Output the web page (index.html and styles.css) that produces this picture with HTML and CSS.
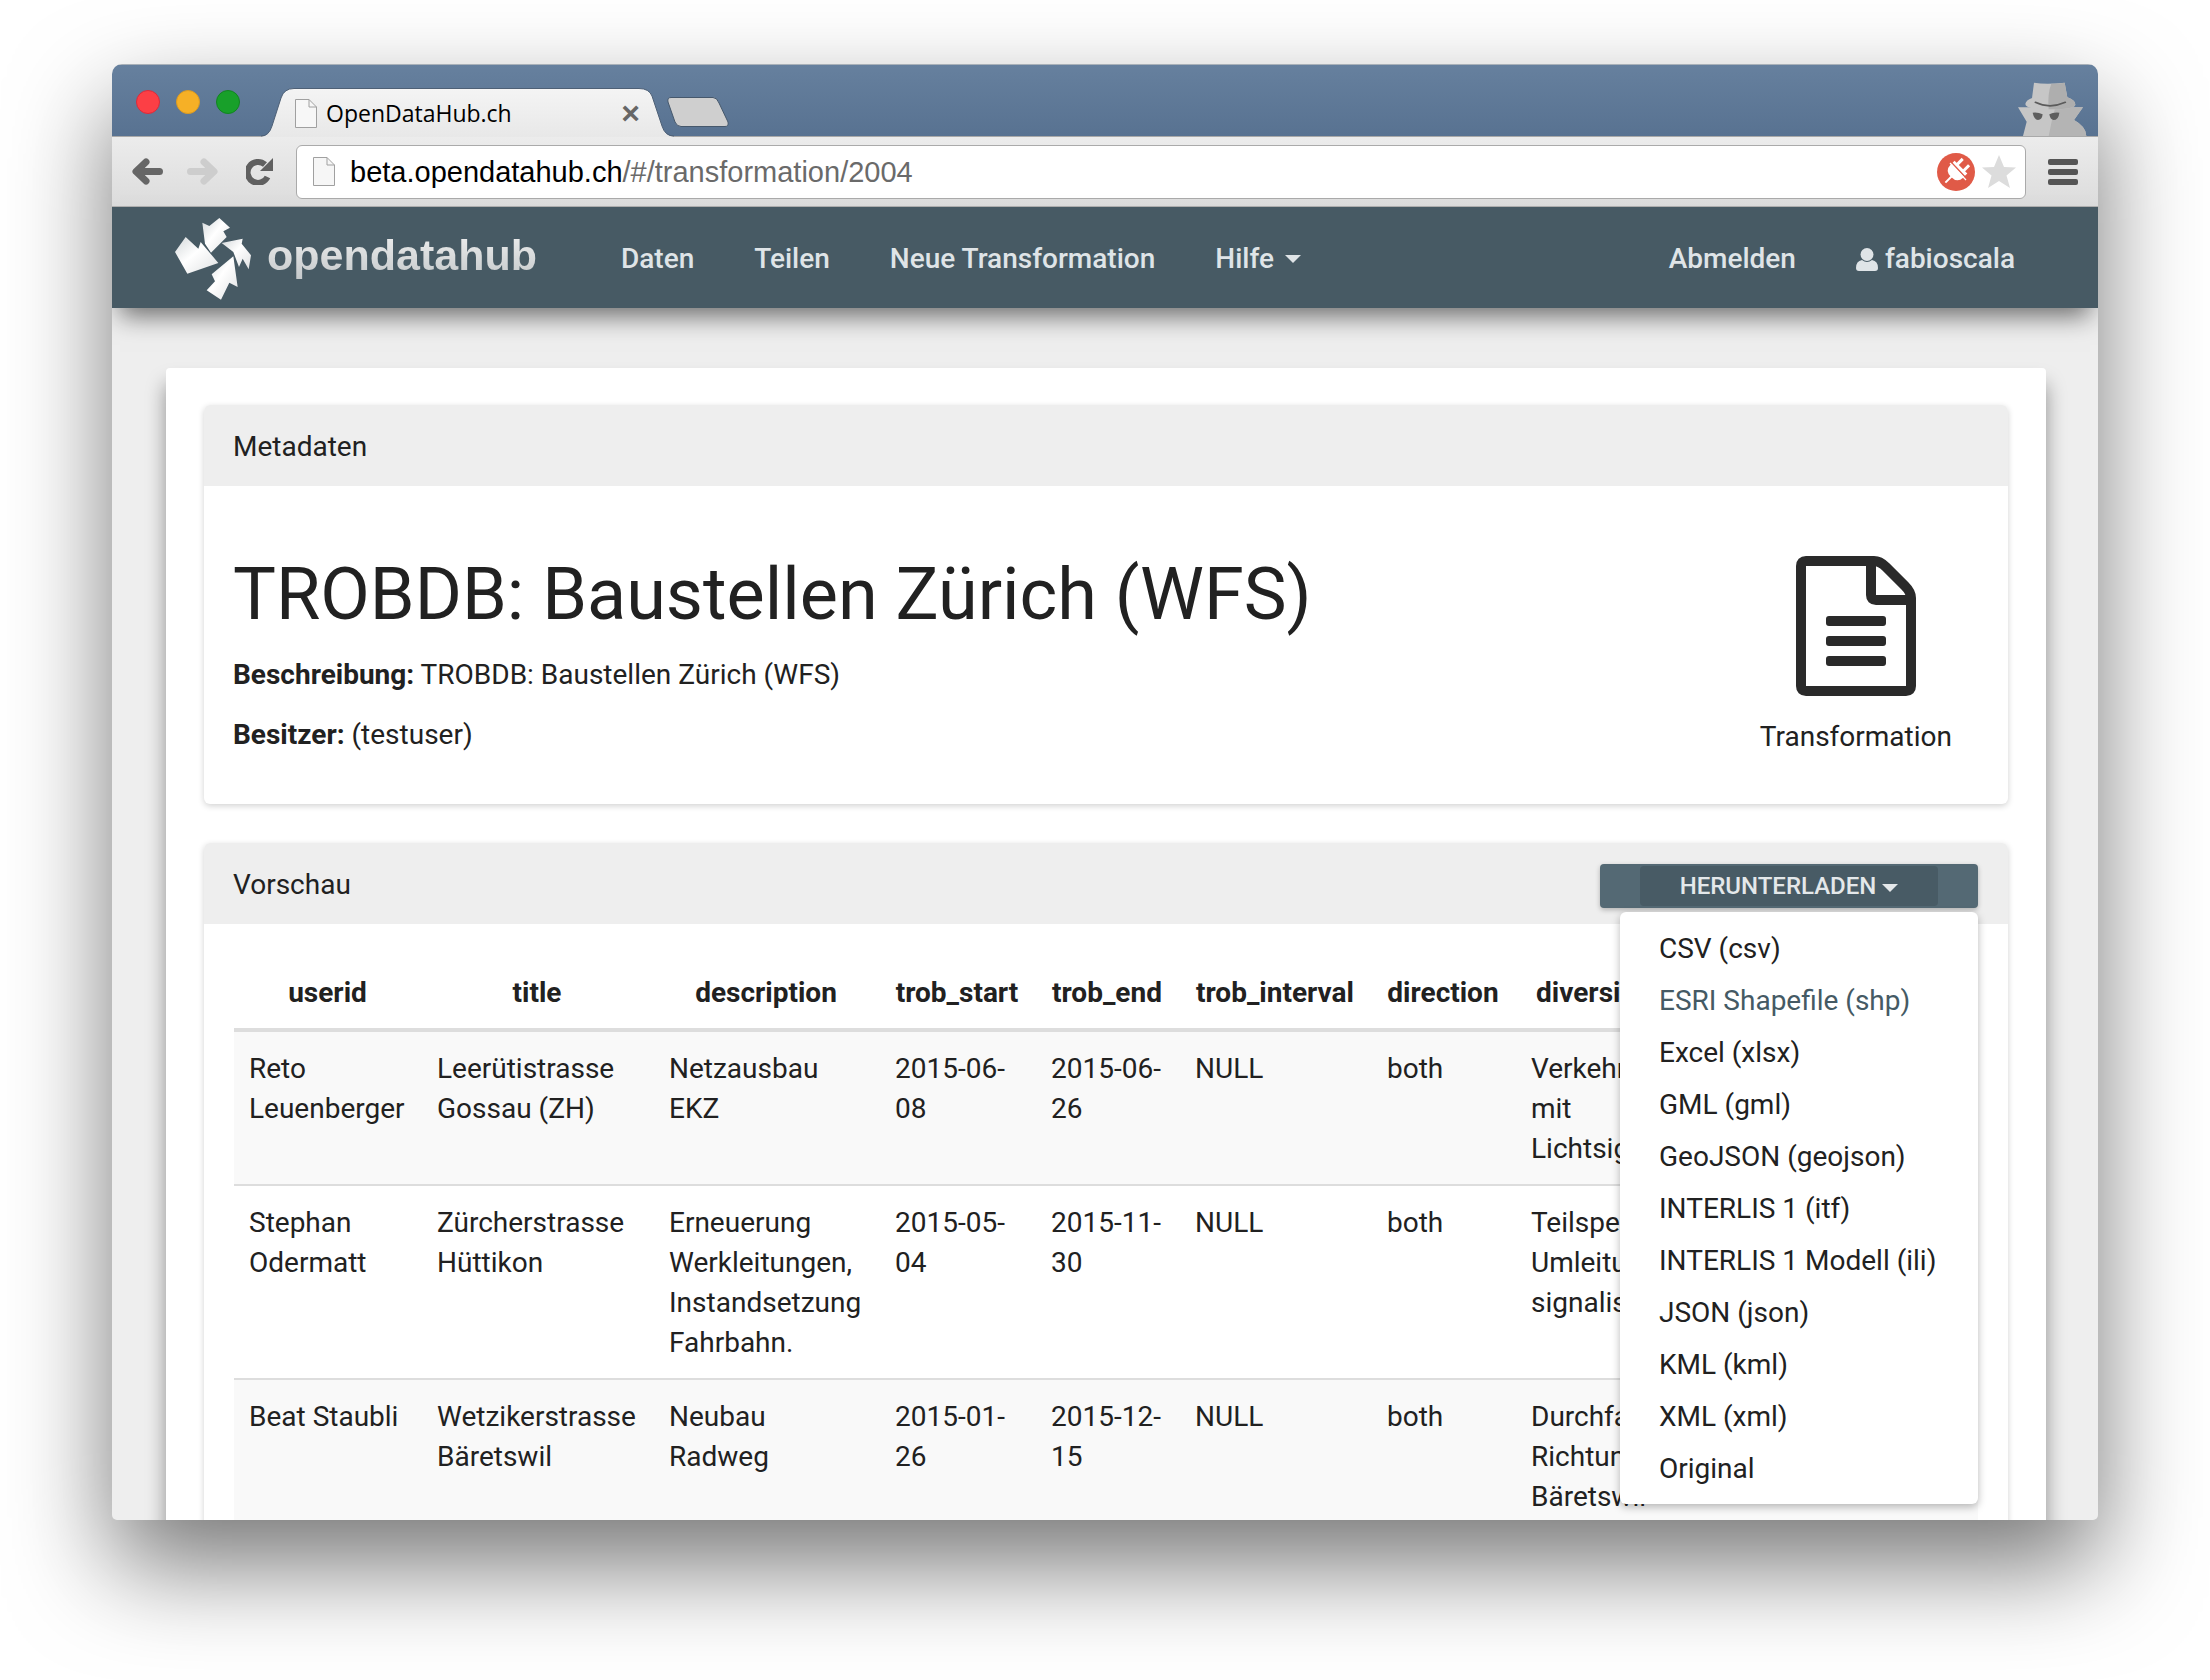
FILE: index.html
```html
<!DOCTYPE html>
<html lang="de">
<head>
    <meta charset="UTF-8">
    <title>OpenDataHub.ch</title>
    <link rel="stylesheet" href="styles.css">
</head>
<body>
    <div class="browser">
        <div class="titlebar">
            <div class="lights">
                <span class="light red"></span>
                <span class="light orange"></span>
                <span class="light green"></span>
            </div>
            <div class="tab">
                <svg class="tab-shape" width="413" height="49" viewBox="0 0 413 49">
                    <defs>
                        <linearGradient id="tabfill" x1="0" y1="0" x2="0" y2="1">
                            <stop offset="0" stop-color="#f4f4f4"/>
                            <stop offset="1" stop-color="#e8e8e8"/>
                        </linearGradient>
                    </defs>
                    <path d="M0 49 Q8 48 11 38 L20 10 Q23 .5 33 .5 H378 Q388 .5 391 8 L401 38 Q404 48 413 49 Z" fill="url(#tabfill)"/>
                    <path d="M0 48 Q8 48 11 38 L20 10 Q23 .5 33 .5 H378 Q388 .5 391 8 L401 38 Q404 48 413 48" fill="none" stroke="#4e6076" stroke-width="1"/>
                </svg>
                <svg class="page-icon" width="22" height="29" viewBox="0 0 22 29">
                    <path d="M.5 .5 H14 L21.5 8 V28.5 H.5 Z" fill="#f7f7f7" stroke="#a0a0a0"/>
                    <path d="M14 .5 V8 H21.5" fill="none" stroke="#a0a0a0"/>
                </svg>
                <span class="tab-title">OpenDataHub.ch</span>
                <span class="tab-close">×</span>
            </div>
            <svg class="new-tab" width="62" height="30" viewBox="0 0 62 30">
                <path d="M4 .5 H46 Q50 .5 52 6 L61 25 Q62 29.500 58 29.500 H14 Q10 29.500 8 25 L1 5 Q0 .5 4 .5 Z" fill="#cfcfcf" stroke="#46586c"/>
            </svg>
            <svg class="incognito" width="72" height="56" viewBox="0 0 216 168">
                <path d="M0 82 H195 L168 120 Q205 140 205 168 H15 L26 125 Z" fill="#c6c6c6"/>
                <path d="M112 82 H195 L168 120 Q205 140 205 168 H92 Q100 125 112 82 Z" fill="#b4b4b4"/>
                <path d="M48 8 Q85 14 140 8 L148 52 Q172 60 172 74 Q172 88 95 88 Q22 88 22 72 Q24 60 42 54 Z" fill="#c6c6c6"/>
                <path d="M100 11 Q120 12 140 8 L148 52 Q172 60 172 74 Q172 88 92 88 Q88 40 100 11 Z" fill="#aeaeae"/>
                <path d="M52 67 Q95 88 142 67" fill="none" stroke="#5b5b5b" stroke-width="5" stroke-linecap="round"/>
                <path d="M44 98 Q60 96 74 103 Q72 120 60 120 Q48 118 44 98 Z M94 103 Q106 96 124 98 Q122 120 106 120 Q96 118 94 103 Z" fill="#5e5e5e"/>
            </svg>
        </div>
        <div class="toolbar">
            <svg class="tool" width="31" height="27" viewBox="0 0 31 27">
                <path d="M27.500 13.500 H7 M14 4 L4 13.500 L14 23" fill="none" stroke="#666" stroke-width="7" stroke-linecap="round" stroke-linejoin="round"/>
            </svg>
            <svg class="tool" width="31" height="27" viewBox="0 0 31 27">
                <path d="M3.500 13.500 H24 M17 4 L27 13.500 L17 23" fill="none" stroke="#cdcdcd" stroke-width="7" stroke-linecap="round" stroke-linejoin="round"/>
            </svg>
            <svg class="tool" width="27" height="27" viewBox="0 0 27 27">
                <path d="M21.500 19 A10.500 10.500 0 1 1 19 6.500" fill="none" stroke="#606060" stroke-width="6"/>
                <path d="M27 0 V13 H14 Z" fill="#606060"/>
            </svg>
            <div class="omnibox">
                <svg class="page-icon" width="22" height="29" viewBox="0 0 22 29">
                    <path d="M.5 .5 H14 L21.5 8 V28.5 H.5 Z" fill="#f6f6f6" stroke="#a0a0a0"/>
                    <path d="M14 .5 V8 H21.5" fill="none" stroke="#a0a0a0"/>
                </svg>
                <span class="url"><b>beta.opendatahub.ch</b>/#/transformation/2004</span>
                <svg class="plug" width="38" height="38" viewBox="0 0 38 38">
                    <circle cx="19" cy="19" r="19" fill="#e05a47"/>
                    <g transform="rotate(45 19 19)" fill="#fff">
                        <rect x="13" y="5" width="3" height="8"/>
                        <rect x="22" y="5" width="3" height="8"/>
                        <path d="M10 12 H28 V18 Q28 26 19 26 Q10 26 10 18 Z"/>
                        <rect x="18" y="25" width="2" height="9"/>
                    </g>
                    <path d="M14 9 L30 26" stroke="#e05a47" stroke-width="1.500"/>
                    <path d="M13 10 L29 27" stroke="#fff" stroke-width="1.200"/>
                </svg>
                <svg class="star" width="34" height="33" viewBox="0 0 34 33">
                    <path d="M17 0 L22 12 L34 12.500 L24.500 20.500 L28 33 L17 26 L6 33 L9.500 20.500 L0 12.500 L12 12 Z" fill="#dcdcdc"/>
                </svg>
            </div>
            <div class="menu-btn"><span></span><span></span><span></span></div>
        </div>

        <div class="page">
            <nav class="navbar">
                <a class="brand">
                    <svg class="brand-mark" width="80" height="85" viewBox="0 0 240 255">
                        <defs>
                            <linearGradient id="blade" x1="0" y1="0" x2="1" y2="1">
                                <stop offset="0" stop-color="#d4d8da"/>
                                <stop offset=".45" stop-color="#fff"/>
                                <stop offset="1" stop-color="#dfe1e2"/>
                            </linearGradient>
                        </defs>
                        <g fill="url(#blade)">
                            <path d="M88 17 L109 27 L139 3 L171 32 L151 43 L161 60 L114 107 L96 80 Z"/>
                            <path d="M146 78 L209 65 L206 80 L234 115 L227 157 L209 125 L198 150 L181 105 Z"/>
                            <path d="M181 118 L194 210 L169 197 L144 248 L101 220 L126 193 L116 172 Z"/>
                            <path d="M38 60 L76 95 L83 75 L136 138 L43 170 L6 105 Z"/>
                        </g>
                    </svg>
                    <span class="brand-text">opendatahub</span>
                </a>
                <ul class="nav-links">
                    <li><a>Daten</a></li>
                    <li><a>Teilen</a></li>
                    <li><a>Neue Transformation</a></li>
                    <li><a>Hilfe<span class="caret"></span></a></li>
                </ul>
                <ul class="nav-links nav-right">
                    <li><a>Abmelden</a></li>
                    <li>
                        <a>
                            <svg class="user-icon" width="22" height="23" viewBox="0 0 22 23">
                                <circle cx="11" cy="6.500" r="6.500"/>
                                <path d="M0 20 Q0 13 6 12 Q11 16 16 12 Q22 13 22 20 Q22 23 19 23 H3 Q0 23 0 20 Z"/>
                            </svg>
                            fabioscala
                        </a>
                    </li>
                </ul>
            </nav>

            <div class="content">
                <div class="card">
                    <section class="panel">
                        <div class="panel-heading">Metadaten</div>
                        <div class="panel-body meta">
                            <div class="meta-text">
                                <h1>TROBDB: Baustellen Zürich (WFS)</h1>
                                <p><strong>Beschreibung:</strong> TROBDB: Baustellen Zürich (WFS)</p>
                                <p><strong>Besitzer:</strong> (testuser)</p>
                            </div>
                            <div class="meta-type">
                                <svg width="120" height="140" viewBox="0 0 120 140">
                                    <path d="M10 5 H78 Q84 5 90 11 L109 30 Q115 36 115 42 V130 Q115 135 110 135 H10 Q5 135 5 130 V10 Q5 5 10 5 Z M75 5 V39 Q75 44 80 44 H115" fill="none" stroke="#2a2a2a" stroke-width="10" stroke-linejoin="round"/>
                                    <rect x="30" y="60" width="60" height="10" rx="3" fill="#2a2a2a"/>
                                    <rect x="30" y="80" width="60" height="10" rx="3" fill="#2a2a2a"/>
                                    <rect x="30" y="100" width="60" height="10" rx="3" fill="#2a2a2a"/>
                                </svg>
                                <div>Transformation</div>
                            </div>
                        </div>
                    </section>

                    <section class="panel">
                        <div class="panel-heading heading-split">
                            <span>Vorschau</span>
                            <div class="download">
                                <button class="download-btn"><span>HERUNTERLADEN<span class="caret"></span></span></button>
                                <ul class="dropdown">
                                    <li>CSV (csv)</li>
                                    <li class="active">ESRI Shapefile (shp)</li>
                                    <li>Excel (xlsx)</li>
                                    <li>GML (gml)</li>
                                    <li>GeoJSON (geojson)</li>
                                    <li>INTERLIS 1 (itf)</li>
                                    <li>INTERLIS 1 Modell (ili)</li>
                                    <li>JSON (json)</li>
                                    <li>KML (kml)</li>
                                    <li>XML (xml)</li>
                                    <li>Original</li>
                                </ul>
                            </div>
                        </div>
                        <div class="panel-body preview">
                            <div class="table-wrap">
                                <table>
                                    <thead>
                                        <tr>
                                            <th>userid</th>
                                            <th>title</th>
                                            <th>description</th>
                                            <th>trob_start</th>
                                            <th>trob_end</th>
                                            <th>trob_interval</th>
                                            <th>direction</th>
                                            <th>diversion</th>
                                            <th></th>
                                        </tr>
                                    </thead>
                                    <tbody>
                                        <tr>
                                            <td>Reto Leuenberger</td>
                                            <td>Leerütistrasse Gossau (ZH)</td>
                                            <td>Netzausbau EKZ</td>
                                            <td>2015-06-08</td>
                                            <td>2015-06-26</td>
                                            <td>NULL</td>
                                            <td>both</td>
                                            <td>Verkehr mit Lichtsignal</td>
                                            <td></td>
                                        </tr>
                                        <tr>
                                            <td>Stephan Odermatt</td>
                                            <td>Zürcherstrasse Hüttikon</td>
                                            <td>Erneuerung Werkleitungen, Instandsetzung Fahrbahn.</td>
                                            <td>2015-05-04</td>
                                            <td>2015-11-30</td>
                                            <td>NULL</td>
                                            <td>both</td>
                                            <td>Teilsperre, Umleitung signalisiert</td>
                                            <td></td>
                                        </tr>
                                        <tr>
                                            <td>Beat Staubli</td>
                                            <td>Wetzikerstrasse Bäretswil</td>
                                            <td>Neubau Radweg</td>
                                            <td>2015-01-26</td>
                                            <td>2015-12-15</td>
                                            <td>NULL</td>
                                            <td>both</td>
                                            <td>Durchfahrt Richtung Bäretswil</td>
                                            <td></td>
                                        </tr>
                                    </tbody>
                                </table>
                            </div>
                        </div>
                    </section>
                </div>
            </div>
        </div>
    </div>
</body>
</html>
```
FILE: styles.css
```css
* {
    box-sizing: border-box;
}

body {
    margin: 0;
    padding: 64px 112px 160px;
    background: #fff;
    font-family: Roboto, sans-serif;
    font-size: 28px;
    line-height: 40px;
    color: #212121;
}

/* Browser window */
.browser {
    width: 1986px;
    height: 1456px;
    overflow: hidden;
    border-radius: 10px 10px 5px 5px;
    background: #eee;
    box-shadow: 0 45px 100px rgba(0, 0, 0, 0.54);
}

.titlebar {
    display: flex;
    align-items: flex-end;
    height: 72px;
    padding-left: 24px;
    border-top: 1px solid #a8b0b8;
    background: linear-gradient(to bottom, #66809e, #587291);
}

.lights {
    display: flex;
    gap: 16px;
    align-self: flex-start;
    margin-top: 25px;
}

.light {
    width: 24px;
    height: 24px;
    border-radius: 50%;
    border: 1px solid;
}

.red {
    background: #fc3f45;
    border-color: #dc2a3a;
}

.orange {
    background: #f6b026;
    border-color: #dc9a20;
}

.green {
    background: #18a02a;
    border-color: #118520;
}

.tab {
    position: relative;
    display: flex;
    align-items: center;
    width: 413px;
    height: 49px;
    margin-left: 21px;
    margin-bottom: -1px;
    padding: 0 34px;
    z-index: 1;
}

.tab-shape {
    position: absolute;
    left: 0;
    top: 0;
}

.tab .page-icon {
    position: relative;
    flex: none;
    margin-top: 2px;
}

.tab-title {
    position: relative;
    margin-left: 9px;
    font-family: "Open Sans", sans-serif;
    font-size: 23px;
    color: #000;
}

.tab-close {
    position: relative;
    margin-left: auto;
    margin-right: 0;
    font-family: "Liberation Sans", sans-serif;
    font-size: 32px;
    font-weight: bold;
    color: #666;
}

.new-tab {
    flex: none;
    align-self: flex-start;
    margin-top: 32px;
    margin-left: -7px;
}

.incognito {
    margin-left: auto;
    margin-right: 8px;
}

.toolbar {
    display: flex;
    align-items: center;
    height: 71px;
    padding-left: 20px;
    border-top: 1px solid #a9a9a9;
    border-bottom: 1px solid #b0b0b0;
    background: linear-gradient(to bottom, #ececec, #dcdcdc);
}

.tool {
    flex: none;
    margin-right: 24px;
}

.tool + .tool + .tool {
    margin-left: 4px;
    margin-right: 23px;
}

.omnibox {
    display: flex;
    align-items: center;
    width: 1730px;
    height: 54px;
    padding: 0 10px 0 16px;
    border: 1px solid #aaa;
    border-radius: 6px;
    background: #fff;
}

.url {
    margin-left: 15px;
    font-family: "Liberation Sans", sans-serif;
    font-size: 29px;
    color: #6a6a6a;
}

.url b {
    font-weight: normal;
    color: #000;
}

.plug {
    margin-left: auto;
}

.star {
    margin-left: 7px;
    margin-right: -1px;
}

.menu-btn {
    display: flex;
    flex-direction: column;
    gap: 4px;
    margin-left: 22px;
}

.menu-btn span {
    width: 30px;
    height: 6px;
    border-radius: 2px;
    background: #555;
}

/* Navbar */
.navbar {
    position: relative;
    display: flex;
    align-items: center;
    height: 101px;
    padding: 0 53px 0 61px;
    background: #475a64;
    box-shadow: 0 16px 24px -8px rgba(0, 0, 0, 0.55);
    z-index: 2;
}

.brand {
    display: flex;
    align-items: center;
    gap: 14px;
    margin-right: 54px;
}

.brand-mark {
    margin-top: 3px;
}

.brand-text {
    margin-top: -6px;
    font-family: "Liberation Sans", sans-serif;
    font-size: 43px;
    font-weight: bold;
    line-height: 50px;
    background: linear-gradient(to bottom, #f0f0f0, #c4c8ca);
    -webkit-background-clip: text;
    background-clip: text;
    color: transparent;
}

.nav-links {
    display: flex;
    margin: 0;
    padding: 0;
    list-style: none;
}

.nav-links a {
    display: flex;
    align-items: center;
    padding: 32px 30px 29px;
    font-weight: 500;
    color: #dfe4e7;
}

.nav-right {
    margin-left: auto;
}

.user-icon {
    margin-right: 7px;
    fill: #dfe4e7;
}

.caret {
    display: inline-block;
    width: 0;
    height: 0;
    margin-left: 11px;
    vertical-align: middle;
    border-top: 8px solid;
    border-left: 8px solid transparent;
    border-right: 8px solid transparent;
}

/* Content */
.content {
    padding: 60px 52px 0 54px;
}

.card {
    padding: 37px 38px;
    border-radius: 4px;
    background: #fff;
    box-shadow: 0 16px 20px rgba(0, 0, 0, 0.4);
}

.panel {
    margin-bottom: 39px;
    border-radius: 6px;
    background: #fff;
    box-shadow: 0 2px 6px rgba(0, 0, 0, 0.18);
}

.panel-heading {
    padding: 22px 30px 19px 29px;
    border-radius: 6px 6px 0 0;
    background: #eee;
}

.heading-split {
    display: flex;
    align-items: flex-start;
    justify-content: space-between;
}

.meta {
    display: flex;
    justify-content: space-between;
    padding: 69px 56px 47px 29px;
}

h1 {
    margin: 0 0 21px;
    font-size: 72px;
    font-weight: 400;
    line-height: 79px;
}

.meta-text p {
    margin: 0 0 20px;
}

.meta-text p:last-child {
    margin-bottom: 0;
}

.meta-type {
    text-align: center;
}

.meta-type svg {
    display: block;
    margin: 1px auto 21px;
}

/* Download button */
.download {
    position: relative;
    margin-top: -1px;
    margin-bottom: -3px;
}

.download-btn {
    display: block;
    width: 378px;
    height: 44px;
    padding: 2px 40px;
    border: 0;
    border-radius: 4px;
    background: #546974;
    font-family: Roboto, sans-serif;
    font-size: 24px;
    font-weight: 500;
    color: #e4e8ea;
    box-shadow: 0 2px 5px rgba(0, 0, 0, 0.25);
}

.download-btn > span {
    display: block;
    height: 40px;
    border-radius: 4px;
    background: #485b65;
    line-height: 40px;
}

.download-btn .caret {
    margin-left: 6px;
}

.dropdown {
    position: absolute;
    right: 0;
    top: 48px;
    width: 358px;
    margin: 0;
    padding: 10px 0;
    list-style: none;
    border-radius: 6px;
    background: #fff;
    box-shadow: 0 3px 8px rgba(0, 0, 0, 0.28);
    z-index: 3;
}

.dropdown li {
    padding: 7px 10px 5px 39px;
}

.dropdown .active {
    color: #455a64;
}

/* Preview table */
.preview {
    padding: 32px 30px 0;
}

.table-wrap {
    overflow: hidden;
}

table {
    width: 1744px;
    table-layout: fixed;
    border-spacing: 0;
}

th {
    padding: 17px 16px 15px;
    border-bottom: 4px solid #ddd;
    font-weight: 700;
    text-align: center;
}

th:nth-child(1) { width: 187px; }
th:nth-child(2) { width: 232px; }
th:nth-child(3) { width: 226px; }
th:nth-child(4) { width: 156px; }
th:nth-child(5) { width: 144px; }
th:nth-child(6) { width: 192px; }
th:nth-child(7) { width: 144px; }
th:nth-child(8) { width: 158px; }

td {
    padding: 17px 16px 15px;
    border-bottom: 2px solid #ddd;
    vertical-align: top;
}

td:first-child {
    padding-left: 15px;
}

tbody tr:nth-child(odd) td {
    background: #f9f9f9;
}
```
